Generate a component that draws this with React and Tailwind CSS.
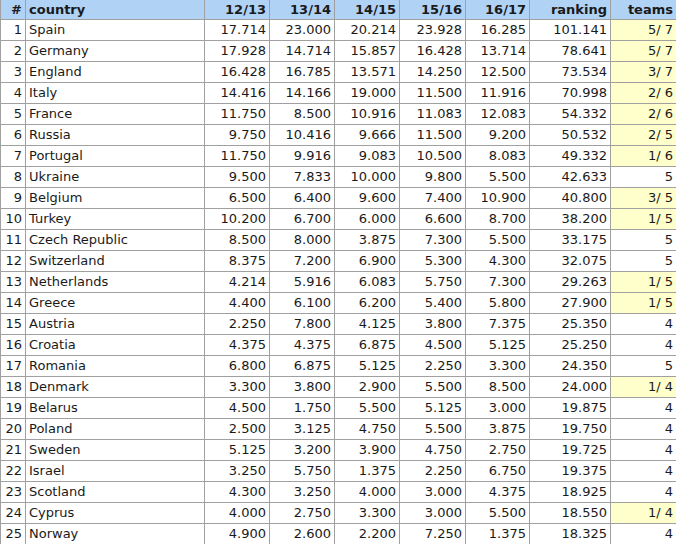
import React from 'react';

const rows = [
    ['Spain', '17.714', '23.000', '20.214', '23.928', '16.285', '101.141', '5/ 7', true],
    ['Germany', '17.928', '14.714', '15.857', '16.428', '13.714', '78.641', '5/ 7', true],
    ['England', '16.428', '16.785', '13.571', '14.250', '12.500', '73.534', '3/ 7', true],
    ['Italy', '14.416', '14.166', '19.000', '11.500', '11.916', '70.998', '2/ 6', true],
    ['France', '11.750', '8.500', '10.916', '11.083', '12.083', '54.332', '2/ 6', true],
    ['Russia', '9.750', '10.416', '9.666', '11.500', '9.200', '50.532', '2/ 5', true],
    ['Portugal', '11.750', '9.916', '9.083', '10.500', '8.083', '49.332', '1/ 6', true],
    ['Ukraine', '9.500', '7.833', '10.000', '9.800', '5.500', '42.633', '5', false],
    ['Belgium', '6.500', '6.400', '9.600', '7.400', '10.900', '40.800', '3/ 5', true],
    ['Turkey', '10.200', '6.700', '6.000', '6.600', '8.700', '38.200', '1/ 5', true],
    ['Czech Republic', '8.500', '8.000', '3.875', '7.300', '5.500', '33.175', '5', false],
    ['Switzerland', '8.375', '7.200', '6.900', '5.300', '4.300', '32.075', '5', false],
    ['Netherlands', '4.214', '5.916', '6.083', '5.750', '7.300', '29.263', '1/ 5', true],
    ['Greece', '4.400', '6.100', '6.200', '5.400', '5.800', '27.900', '1/ 5', true],
    ['Austria', '2.250', '7.800', '4.125', '3.800', '7.375', '25.350', '4', false],
    ['Croatia', '4.375', '4.375', '6.875', '4.500', '5.125', '25.250', '4', false],
    ['Romania', '6.800', '6.875', '5.125', '2.250', '3.300', '24.350', '5', false],
    ['Denmark', '3.300', '3.800', '2.900', '5.500', '8.500', '24.000', '1/ 4', true],
    ['Belarus', '4.500', '1.750', '5.500', '5.125', '3.000', '19.875', '4', false],
    ['Poland', '2.500', '3.125', '4.750', '5.500', '3.875', '19.750', '4', false],
    ['Sweden', '5.125', '3.200', '3.900', '4.750', '2.750', '19.725', '4', false],
    ['Israel', '3.250', '5.750', '1.375', '2.250', '6.750', '19.375', '4', false],
    ['Scotland', '4.300', '3.250', '4.000', '3.000', '4.375', '18.925', '4', false],
    ['Cyprus', '4.000', '2.750', '3.300', '3.000', '5.500', '18.550', '1/ 4', true],
    ['Norway', '4.900', '2.600', '2.200', '7.250', '1.375', '18.325', '4', false],
];

const headers = ['12/13', '13/14', '14/15', '15/16', '16/17', 'ranking', 'teams'];

const cell = 'border-r border-b border-[#a0a0a0] px-[3px] whitespace-pre overflow-hidden';

const App = () => {
    return (
        <div className="w-[676px] h-[544px] overflow-hidden bg-white text-[13px] text-[#1a1a1a] font-['DejaVu_Sans',Verdana,sans-serif]">
            <div className="grid grid-cols-[25px_179px_65px_65px_65px_66px_64px_81px_66px] auto-rows-[21px] grid-rows-[20px] border-l border-[#a0a0a0]">
                <div className={`${cell} bg-[#b0d2f5] font-bold text-right leading-[19px]`}>#</div>
                <div className={`${cell} bg-[#b0d2f5] font-bold leading-[19px]`}>country</div>
                {headers.map((h) => (
                    <div key={h} className={`${cell} bg-[#b0d2f5] font-bold text-right leading-[19px]`}>
                        {h}
                    </div>
                ))}
                {rows.map((r, i) => (
                    <React.Fragment key={r[0]}>
                        <div className={`${cell} text-right leading-[20px]`}>{i + 1}</div>
                        <div className={`${cell} leading-[20px]`}>{r[0]}</div>
                        {r.slice(1, 7).map((v, j) => (
                            <div key={j} className={`${cell} text-right leading-[20px]`}>
                                {v}
                            </div>
                        ))}
                        <div className={`${cell} text-right leading-[20px] ${r[8] ? 'bg-[#ffffcc]' : ''}`}>{r[7]}</div>
                    </React.Fragment>
                ))}
            </div>
        </div>
    );
};

export default App;
